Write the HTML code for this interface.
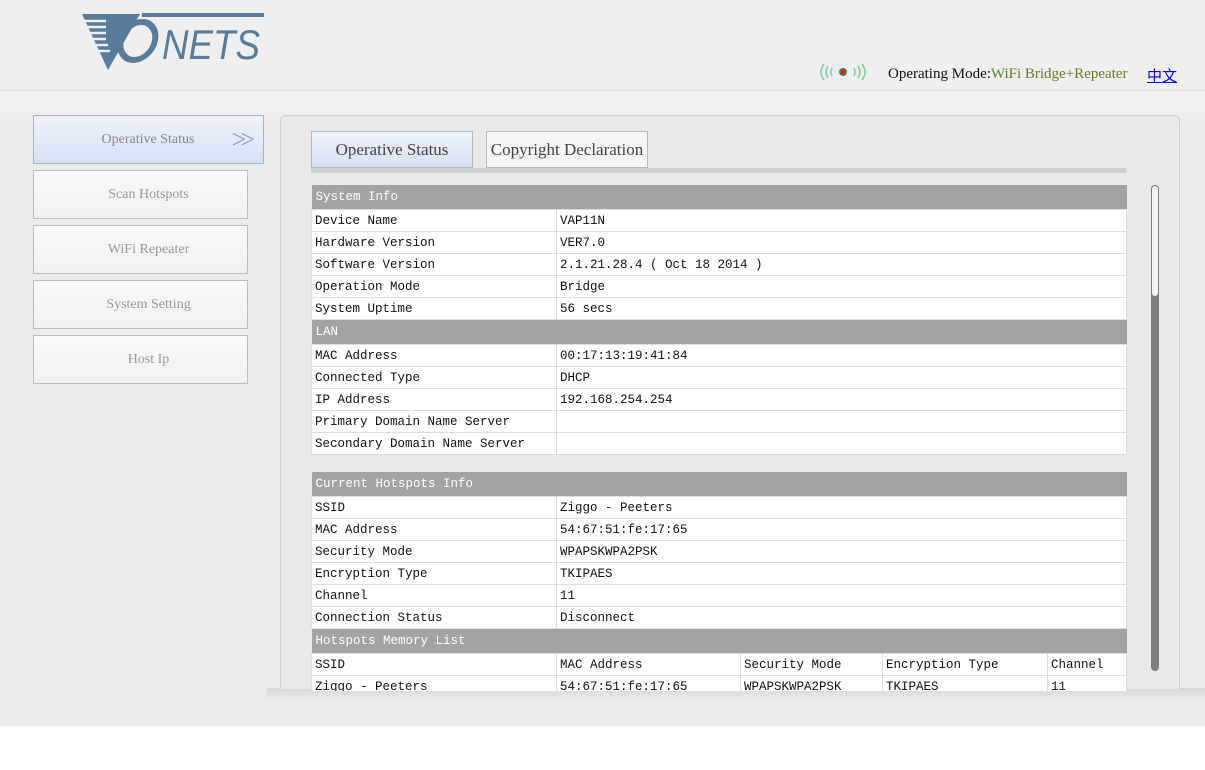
<!DOCTYPE html>
<html><head><meta charset="utf-8"><style>
body{margin:0;width:1205px;height:770px;background:#fff;position:relative;overflow:hidden;font-family:"Liberation Serif",serif}
.hdr{position:absolute;left:0;top:0;width:1205px;height:90px;background:#efefef;border-bottom:1px solid #dcdcdc}
.main{position:absolute;left:0;top:91px;width:1205px;height:635px;background:linear-gradient(#f3f3f3,#ebebeb 40px)}
.nav{position:absolute;left:33px;width:215px;height:49px;border:1px solid #bdbdbd;background:linear-gradient(#fafafa,#f0f0f0);color:#999;font-size:14px;text-align:center;line-height:47px;box-sizing:border-box;padding-left:16px}
.panel{position:absolute;left:280px;top:115px;width:900px;height:583px;border:1px solid #cfcfcf;border-radius:6px;background:#e9e9e9;box-sizing:border-box}
.tab{position:absolute;top:131px;height:37px;border:1px solid #b8b8b8;box-sizing:border-box;font-size:17px;line-height:35px;text-align:center;color:#444}
table{position:absolute;left:311px;border-collapse:collapse;font-family:"Liberation Mono",monospace;font-size:12.5px;color:#111}
td{border:1px solid #ddd;height:21px;padding:0 0 0 3px;background:#fff;white-space:nowrap}
td.h{background:#a3a3a3;color:#fff;height:24px;border:none;padding-left:4px}
</style></head><body>
<div class="hdr">
<svg style="position:absolute;left:80px;top:12px" width="186" height="60" viewBox="0 0 186 60">
<g fill="#587c99">
<polygon points="2,2 60,2 28,58"/>
<rect x="62" y="1" width="122" height="4"/>
</g>
<g stroke="#efefef" stroke-width="2.4">
<line x1="2" y1="9" x2="26" y2="9"/><line x1="4" y1="15" x2="26" y2="15"/><line x1="6" y1="21" x2="26" y2="21"/><line x1="8" y1="27" x2="26" y2="27"/><line x1="12" y1="33" x2="28" y2="33"/><line x1="14" y1="39" x2="30" y2="39"/>
</g>
<ellipse cx="58" cy="29" rx="17" ry="19" fill="none" stroke="#587c99" stroke-width="6" transform="skewX(-12) translate(6 0)"/>
<text x="82" y="47" font-family="Liberation Sans" font-style="italic" font-size="42" fill="#587c99" textLength="98" lengthAdjust="spacingAndGlyphs">NETS</text>
</svg>
<svg style="position:absolute;left:818px;top:62px" width="50" height="20" viewBox="0 0 50 20">
<g fill="none" stroke="#7fcf9a" stroke-width="1.5"><path d="M6 2 Q0 10 6 18"/><path d="M10 4 Q6 10 10 16"/><path d="M14 6 Q12 10 14 14"/><path d="M44 2 Q50 10 44 18"/><path d="M40 4 Q44 10 40 16"/><path d="M36 6 Q38 10 36 14"/></g>
<circle cx="25" cy="10" r="4" fill="#3a8a4a"/><path d="M23 8 L27 12 M27 8 L23 12" stroke="#e02020" stroke-width="2"/>
</svg>
<div style="position:absolute;left:888px;top:66px;font-size:15px;color:#111">Operating Mode:<span style="color:#5e7f2a">WiFi Bridge+Repeater</span></div>
<div style="position:absolute;left:1147px;top:65px;font-size:15px;color:#00e;text-decoration:underline;font-family:'Noto Sans CJK SC',sans-serif">中文</div>
</div>
<div class="main"></div>
<div class="nav" style="top:115px;width:231px;height:49px;line-height:48px;background:linear-gradient(#eef2fa,#d6e2f4);border-color:#aab4c4;padding-left:0;padding-right:1px;color:#888">Operative Status<span style="position:absolute;right:14px;top:0;font-size:26px;color:#8a9ec4;letter-spacing:-6px">&gt;&gt;</span></div>
<div class="nav" style="top:170px">Scan Hotspots</div>
<div class="nav" style="top:225px">WiFi Repeater</div>
<div class="nav" style="top:280px">System Setting</div>
<div class="nav" style="top:335px">Host Ip</div>
<div class="panel"></div>
<div style="position:absolute;left:267px;top:688px;width:938px;height:12px;background:linear-gradient(#d8d8d8,#ebebeb)"></div>
<div class="panel" style="height:574px;border-bottom:none;border-radius:6px 6px 0 0"></div>
<div class="tab" style="left:311px;width:162px;background:linear-gradient(#eef2fa,#d7e2f3)">Operative Status</div>
<div class="tab" style="left:486px;width:162px;background:#f5f5f5">Copyright Declaration</div>
<div style="position:absolute;left:311px;top:168px;width:815px;height:5px;background:#cfcfcf"></div>
<div style="position:absolute;left:1151px;top:185px;width:8px;height:486px;border-radius:4px;background:#7d7d7d"></div>
<div style="position:absolute;left:1152px;top:186px;width:6px;height:110px;border-radius:3px;background:#f4f4f4"></div>
<div style="position:absolute;left:311px;top:185px;width:816px;height:506px;overflow:hidden">
<table style="left:0;top:0;width:816px">
<tr><td class="h" colspan="2">System Info</td></tr>
<tr><td style="width:241px">Device Name</td><td>VAP11N</td></tr>
<tr><td>Hardware Version</td><td>VER7.0</td></tr>
<tr><td>Software Version</td><td>2.1.21.28.4 ( Oct 18 2014 )</td></tr>
<tr><td>Operation Mode</td><td>Bridge</td></tr>
<tr><td>System Uptime</td><td>56 secs</td></tr>
<tr><td class="h" colspan="2">LAN</td></tr>
<tr><td>MAC Address</td><td>00:17:13:19:41:84</td></tr>
<tr><td>Connected Type</td><td>DHCP</td></tr>
<tr><td>IP Address</td><td>192.168.254.254</td></tr>
<tr><td>Primary Domain Name Server</td><td></td></tr>
<tr><td>Secondary Domain Name Server</td><td></td></tr>
</table>
<table style="left:0;top:287px;width:816px">
<tr><td class="h" colspan="2">Current Hotspots Info</td></tr>
<tr><td style="width:241px">SSID</td><td>Ziggo - Peeters</td></tr>
<tr><td>MAC Address</td><td>54:67:51:fe:17:65</td></tr>
<tr><td>Security Mode</td><td>WPAPSKWPA2PSK</td></tr>
<tr><td>Encryption Type</td><td>TKIPAES</td></tr>
<tr><td>Channel</td><td>11</td></tr>
<tr><td>Connection Status</td><td>Disconnect</td></tr>
</table>
<table style="left:0;top:444px;width:816px">
<tr><td class="h" colspan="5">Hotspots Memory List</td></tr>
<tr><td style="width:241px">SSID</td><td style="width:180px">MAC Address</td><td style="width:138px">Security Mode</td><td style="width:161px">Encryption Type</td><td>Channel</td></tr>
<tr><td>Ziggo - Peeters</td><td>54:67:51:fe:17:65</td><td>WPAPSKWPA2PSK</td><td>TKIPAES</td><td>11</td></tr>
</table>
</div>
</body></html>
